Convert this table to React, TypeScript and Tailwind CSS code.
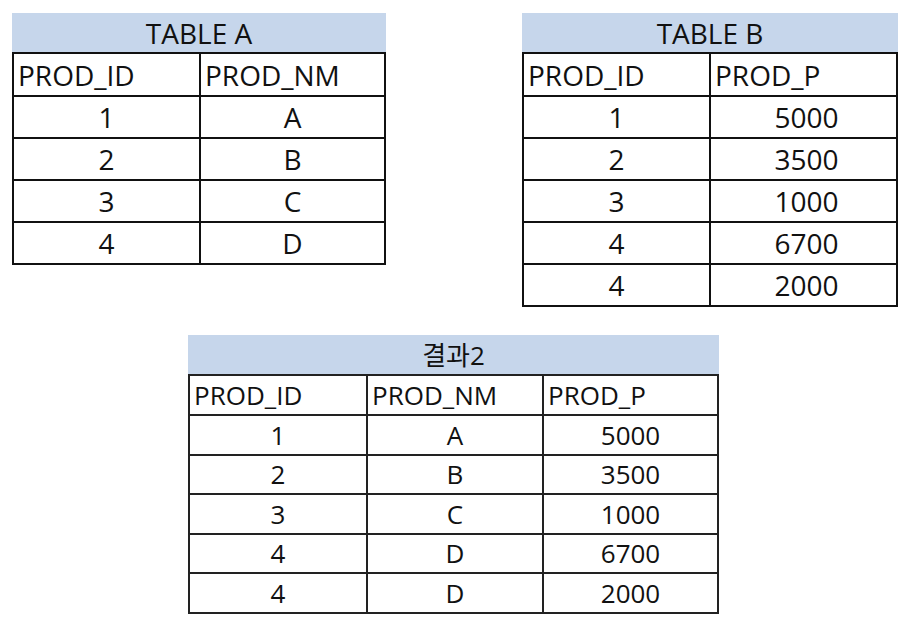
const font = { fontFamily: '"Open Sans", "Noto Sans CJK KR", sans-serif' };

type Col = { w: string; align: string };

const Grid = ({
  title,
  width,
  cols,
  head,
  rows,
  headH,
  rowH,
  size,
  line,
}: {
  title: string;
  width: string;
  cols: Col[];
  head: string[];
  rows: string[][];
  headH: string;
  rowH: string;
  size: string;
  line: string;
}) => (
  <div className={`${width} ${size} text-[#111]`}>
    <div className="bg-[#c6d6eb] h-[39px] flex items-center justify-center leading-none">
      {title}
    </div>
    <div className={`border-2 ${line}`}>
      <div className={`flex ${headH}`}>
        {head.map((h, i) => (
          <div
            key={h}
            className={`${cols[i].w} ${i > 0 ? `border-l-2 ${line}` : ""} flex items-center pl-[4px] leading-none`}
          >
            {h}
          </div>
        ))}
      </div>
      {rows.map((r, ri) => (
        <div key={ri} className={`flex border-t-2 ${line} ${rowH}`}>
          {r.map((c, i) => (
            <div
              key={i}
              className={`${cols[i].w} ${i > 0 ? `border-l-2 ${line}` : ""} flex items-center ${cols[i].align} leading-none`}
            >
              {c}
            </div>
          ))}
        </div>
      ))}
    </div>
  </div>
);

export default function App() {
  return (
    <div className="w-[923px] h-[643px] bg-white pt-[13px] pl-[12px]" style={font}>
      <div className="flex gap-[136px]">
        <Grid
          title="TABLE A"
          width="w-[374px]"
          size="text-[28px]"
          line="border-[#111]"
          cols={[
            { w: "w-[185px]", align: "justify-center" },
            { w: "flex-1", align: "justify-center" },
          ]}
          head={["PROD_ID", "PROD_NM"]}
          rows={[["1", "A"], ["2", "B"], ["3", "C"], ["4", "D"]]}
          headH="h-[41px]"
          rowH="h-[42px]"
        />
        <Grid
          title="TABLE B"
          width="w-[376px]"
          size="text-[28px]"
          line="border-[#111]"
          cols={[
            { w: "w-[185px]", align: "justify-center" },
            { w: "flex-1", align: "justify-center pl-[6px]" },
          ]}
          head={["PROD_ID", "PROD_P"]}
          rows={[
            ["1", "5000"],
            ["2", "3500"],
            ["3", "1000"],
            ["4", "6700"],
            ["4", "2000"],
          ]}
          headH="h-[41px]"
          rowH="h-[42px]"
        />
      </div>
      <div className="mt-[28px] ml-[176px]">
        <Grid
          title="결과2"
          width="w-[531px]"
          size="text-[26px]"
          line="border-[#222]"
          cols={[
            { w: "w-[176px]", align: "justify-center" },
            { w: "w-[176px]", align: "justify-center" },
            { w: "flex-1", align: "justify-center" },
          ]}
          head={["PROD_ID", "PROD_NM", "PROD_P"]}
          rows={[
            ["1", "A", "5000"],
            ["2", "B", "3500"],
            ["3", "C", "1000"],
            ["4", "D", "6700"],
            ["4", "D", "2000"],
          ]}
          headH="h-[38px]"
          rowH="h-[39.5px]"
        />
      </div>
    </div>
  );
}
